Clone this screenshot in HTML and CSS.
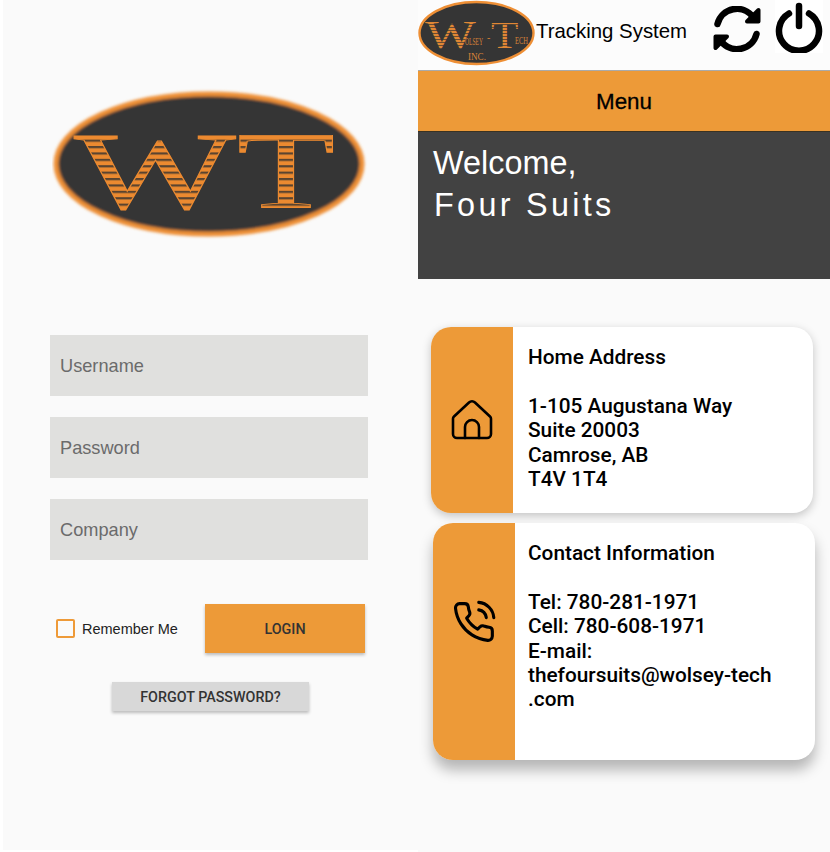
FILE: index.html
```html
<!DOCTYPE html>
<html lang="en">
<head>
    <meta charset="UTF-8">
    <meta name="viewport" content="width=device-width, initial-scale=1.0">
    <title>Tracking System</title>
    <link rel="stylesheet" href="styles.css">
</head>
<body>
    <svg class="defs" width="0" height="0">
        <defs>
            <pattern id="stripes" width="6.4" height="6.4" patternUnits="userSpaceOnUse" patternTransform="translate(0 2)">
                <rect width="6.4" height="6.4" fill="#ec8a30"/>
                <rect width="6.4" height="2.2" fill="#5a4430"/>
            </pattern>
            <pattern id="stripes-small" width="3" height="3" patternUnits="userSpaceOnUse">
                <rect width="3" height="3" fill="#e08735"/>
                <rect width="3" height="1" fill="#6a4c32"/>
            </pattern>
            <filter id="soft"><feGaussianBlur stdDeviation="1.6"/></filter>
            <filter id="soft-small"><feGaussianBlur stdDeviation="0.5"/></filter>
        </defs>
    </svg>

    <!-- login screen -->
    <main class="login">
        <svg class="login-logo" viewBox="0 0 320 156">
            <ellipse cx="157" cy="78" rx="153" ry="70" fill="#353535" stroke="#ee8f35" stroke-width="5" filter="url(#soft)"/>
            <text class="logo-big" transform="translate(22 122) scale(1.56 1)" fill="url(#stripes)" stroke="#ec8a30" stroke-width="0.8">W</text>
            <text class="logo-big" transform="translate(185 122) scale(1.46 1)" fill="url(#stripes)" stroke="#ec8a30" stroke-width="0.8">T</text>
        </svg>

        <div class="fields">
            <div class="field">Username</div>
            <div class="field">Password</div>
            <div class="field">Company</div>
        </div>

        <div class="login-row">
            <label class="remember">
                <span class="checkbox"></span>
                Remember Me
            </label>
            <button class="btn btn-login">LOGIN</button>
        </div>

        <div class="forgot-row">
            <button class="btn btn-forgot">FORGOT PASSWORD?</button>
        </div>
    </main>

    <!-- dashboard screen -->
    <section class="dash">
        <header class="topbar">
            <svg class="top-logo" viewBox="0 0 118 66">
                <ellipse cx="58.5" cy="33" rx="57" ry="31" fill="#353535" stroke="#ee8f35" stroke-width="2.4" filter="url(#soft-small)"/>
                <text class="mini-big" transform="translate(7 48) scale(1.38 1)" fill="url(#stripes-small)">W</text>
                <text class="mini-small" x="47" y="45" textLength="18" lengthAdjust="spacingAndGlyphs" fill="#d98238">OLSEY</text>
                <text class="mini-small" x="69" y="41" fill="#d98238">-</text>
                <text class="mini-big" transform="translate(73 48) scale(1.15 1)" fill="url(#stripes-small)">T</text>
                <text class="mini-small" x="97" y="44" textLength="13" lengthAdjust="spacingAndGlyphs" fill="#d98238">ECH</text>
                <text class="mini-small" x="50" y="60" textLength="18" lengthAdjust="spacingAndGlyphs" fill="#d98238">INC.</text>
            </svg>
            <span class="top-title">Tracking System</span>
            <svg class="sync-icon" viewBox="0 0 48 46">
                <path class="sync-arc" d="M4.5 18A20 20 0 0 1 40 11"/>
                <path class="sync-arc" d="M43.5 28A20 20 0 0 1 8 35"/>
                <path class="sync-head" d="M45.5 4v11.5H34z"/>
                <path class="sync-head" d="M2.5 42V30.5H14z"/>
            </svg>
            <div class="power-box">
                <svg class="power-icon" viewBox="0 0 48 53">
                    <path d="M14 13.5a20 20 0 1 0 20 0" />
                    <path d="M24 6v20" />
                </svg>
            </div>
        </header>

        <div class="menu-bar">Menu</div>

        <div class="welcome">
            <div class="welcome-line">Welcome,</div>
            <div class="welcome-line welcome-name">Four Suits</div>
        </div>

        <div class="cards">
            <article class="card card-home">
                <div class="card-side">
                    <svg class="card-icon" viewBox="0 0 44 44">
                        <path d="M4 18.5 19 4.5a4.4 4.4 0 0 1 6 0L40 18.5a3 3 0 0 1 1 2.3V36a4 4 0 0 1-4 4H7a4 4 0 0 1-4-4V20.8a3 3 0 0 1 1-2.3z"/>
                        <path d="M15 40V29a7 7 0 0 1 14 0v11"/>
                    </svg>
                </div>
                <div class="card-body">
                    <p>Home Address</p>
                    <p class="gap">1-105 Augustana Way<br>Suite 20003<br>Camrose, AB<br>T4V 1T4</p>
                </div>
            </article>

            <article class="card card-contact">
                <div class="card-side">
                    <svg class="card-icon" viewBox="0 0 24 24">
                        <path d="M14.6 5.4A5 5 0 0 1 18.7 9.6M14.6 1.3A9 9 0 0 1 22.8 9.6"/>
                        <path d="M22 16.9v2.9a2.3 2.3 0 0 1-2.5 2.2 19.8 19.8 0 0 1-8.6-3 19.5 19.5 0 0 1-6-6A19.8 19.8 0 0 1 1.9 4.4 2.3 2.3 0 0 1 4.1 2h2.8a2 2 0 0 1 2 1.7c.1 1 .3 1.9.7 2.8a2 2 0 0 1-.4 2.1L8 9.9a16 16 0 0 0 6 6l1.3-1.3a2 2 0 0 1 2.1-.4c.9.3 1.8.6 2.8.7a2 2 0 0 1 1.8 2z"/>
                    </svg>
                </div>
                <div class="card-body">
                    <p>Contact Information</p>
                    <p class="gap">Tel: 780-281-1971<br>Cell: 780-608-1971<br>E-mail:<br>thefoursuits@wolsey-tech<br>.com</p>
                </div>
            </article>
        </div>
    </section>
</body>
</html>
```

FILE: styles.css
```css
* {
    box-sizing: border-box;
}

body {
    margin: 0;
    background: #fff;
    display: flex;
    height: 852px;
    overflow: hidden;
    font-family: 'Liberation Sans', Arial, sans-serif;
    color: #000;
}

.defs {
    position: absolute;
}

/* login */
.login {
    width: 415px;
    height: 850px;
    margin-left: 3px;
    background: #fafafa;
    padding-top: 86px;
}

.login-logo {
    display: block;
    width: 320px;
    height: 156px;
    margin-left: 49px;
}

.logo-big {
    font-family: 'Liberation Serif', serif;
    font-size: 110px;
}

.fields {
    margin: 93px 0 0 47px;
    width: 318px;
    display: flex;
    flex-direction: column;
    gap: 21px;
}

.field {
    height: 61px;
    background: #e0e0de;
    color: #6b6b6b;
    font-size: 18.2px;
    line-height: 62px;
    padding-left: 10px;
}

.login-row {
    display: flex;
    align-items: center;
    margin: 44px 0 0 53px;
}

.remember {
    display: flex;
    align-items: center;
    width: 149px;
    font-size: 14.5px;
    color: #222;
}

.checkbox {
    width: 19px;
    height: 19px;
    border: 2px solid #ee9a38;
    border-radius: 2px;
    margin-right: 7px;
}

.btn {
    display: block;
    border: none;
    font-family: Roboto, sans-serif;
    font-weight: 500;
    font-size: 14.3px;
    color: #333;
    padding: 0;
}

.btn-login {
    width: 160px;
    height: 49px;
    background: #ed9a38;
    box-shadow: 0 2px 3px rgba(0, 0, 0, 0.25);
}

.forgot-row {
    display: flex;
    margin: 29px 0 0 109px;
}

.btn-forgot {
    width: 197px;
    height: 29px;
    background: #d8d8d8;
    box-shadow: 0 2px 3px rgba(0, 0, 0, 0.25);
}

/* dashboard */
.dash {
    width: 412px;
    background: #fafafa;
}

.topbar {
    display: flex;
    align-items: flex-start;
    height: 71px;
    background: #fcfcfc;
    border-bottom: 1px solid #aaa;
}

.top-logo {
    width: 118px;
    height: 66px;
    flex: none;
}

.mini-big {
    font-family: 'Liberation Serif', serif;
    font-size: 39px;
}

.mini-small {
    font-family: 'Liberation Serif', serif;
    font-size: 10px;
}

.top-title {
    margin-top: 19px;
    font-size: 20.4px;
    line-height: 24px;
    width: 177px;
    flex: none;
}

.sync-icon {
    width: 48px;
    height: 46px;
    margin-top: 6px;
    flex: none;
}

.sync-arc {
    fill: none;
    stroke: #000;
    stroke-width: 6.5;
    stroke-linecap: round;
}

.sync-head {
    fill: #000;
    stroke: #000;
    stroke-width: 4;
    stroke-linejoin: round;
}

.power-box {
    width: 48px;
    height: 53px;
    margin-left: 14px;
    background: #fff;
    flex: none;
}

.power-icon {
    display: block;
    width: 48px;
    height: 53px;
    fill: none;
    stroke: #000;
    stroke-width: 6.5;
    stroke-linecap: round;
}

.menu-bar {
    height: 61px;
    background: #ed9a38;
    border-bottom: 1px solid #3a3222;
    text-align: center;
    line-height: 61px;
    font-size: 22.4px;
    -webkit-text-stroke: 0.3px #000;
}

.welcome {
    height: 147px;
    background: #424242;
    color: #fff;
    padding: 10px 0 0 15px;
    font-size: 32.4px;
    line-height: 42px;
}

.welcome-name {
    padding-left: 1px;
    letter-spacing: 3.3px;
}

.cards {
    margin-top: 48px;
    display: flex;
    flex-direction: column;
    gap: 10px;
}

.card {
    width: 382px;
    display: flex;
    border-radius: 20px;
    overflow: hidden;
    background: #fff;
    font-family: Roboto, sans-serif;
    font-weight: 500;
    font-size: 20.8px;
    line-height: 24.4px;
}

.card-home {
    height: 186px;
    margin-left: 13px;
    box-shadow: 0 3px 10px rgba(0, 0, 0, 0.22);
}

.card-contact {
    height: 237px;
    margin-left: 15px;
    box-shadow: 0 10px 14px rgba(0, 0, 0, 0.28);
}

.card-side {
    width: 82px;
    flex: none;
    background: #ed9a38;
    display: flex;
    align-items: center;
    justify-content: center;
}

.card-icon {
    width: 44px;
    height: 44px;
    fill: none;
    stroke: #000;
    stroke-width: 2.6;
    stroke-linecap: round;
    stroke-linejoin: round;
}

.card-contact .card-icon {
    margin-bottom: 39px;
    stroke-width: 1.7;
}

.card-body {
    padding: 18px 0 0 15px;
}

.card-contact .card-body {
    padding-left: 13px;
}

.card-body p {
    margin: 0;
}

.card-body .gap {
    margin-top: 24.4px;
}
```
